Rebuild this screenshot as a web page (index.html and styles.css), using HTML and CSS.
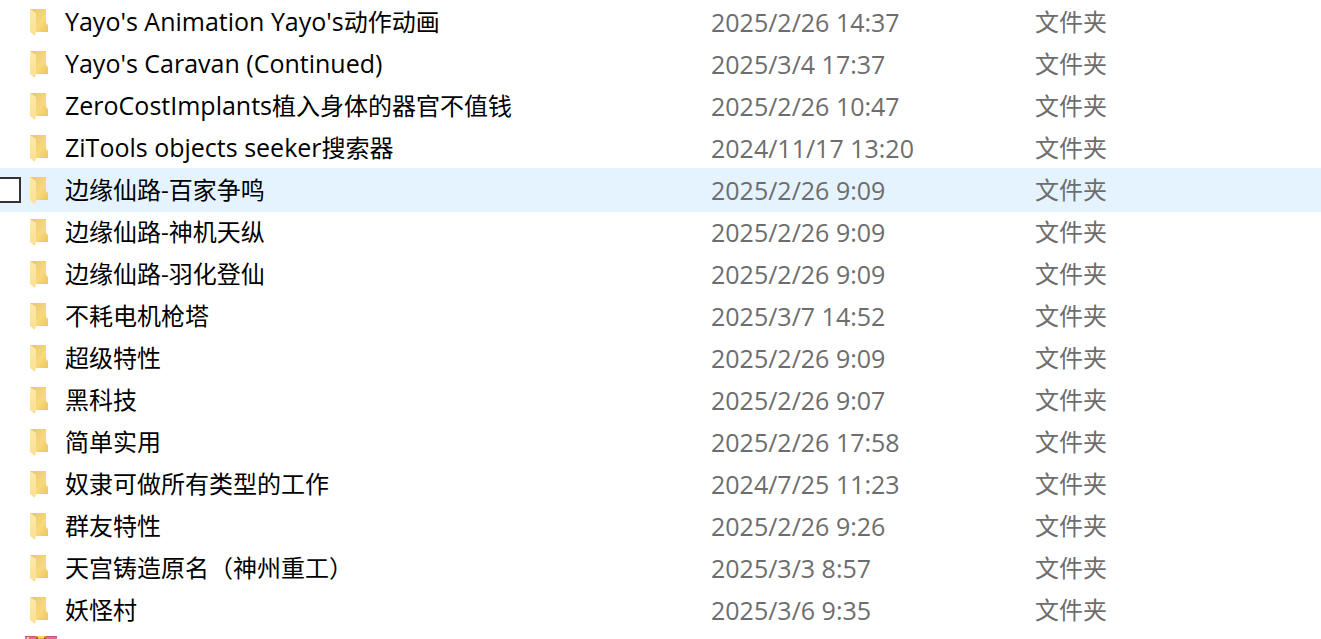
FILE: index.html
```
<!DOCTYPE html>
<html lang="zh-CN">
  <head>
    <meta charset="UTF-8" />
    <meta name="viewport" content="width=device-width, initial-scale=1.0" />
    <title>文件夹</title>
    <link rel="stylesheet" href="styles.css" />
  </head>
  <body>
    <svg class="sprite" aria-hidden="true">
      <defs>
        <linearGradient id="back" x1="0" y1="0" x2="1" y2="1">
          <stop offset="0" stop-color="#e6c673" />
          <stop offset="0.6" stop-color="#f8d97c" />
          <stop offset="1" stop-color="#ebc660" />
        </linearGradient>
        <linearGradient id="flap" x1="0" y1="0" x2="0" y2="1">
          <stop offset="0" stop-color="#ffe9ab" />
          <stop offset="1" stop-color="#fbdf92" />
        </linearGradient>
      </defs>
      <symbol id="folder" viewBox="0 0 19 27">
        <path d="M0 0H16V14L18 16V23H5L0 21Z" fill="url(#back)" />
        <path d="M0 0L6 4V23L5 27L0 23Z" fill="url(#flap)" />
      </symbol>
    </svg>
    <main>
      <table class="files">
        <colgroup>
          <col class="col-check" />
          <col class="col-icon" />
          <col class="col-name" />
          <col class="col-date" />
          <col class="col-type" />
        </colgroup>
        <tbody>
          <tr>
            <td></td>
            <td><svg class="folder"><use href="#folder" /></svg></td>
            <td class="name"><span class="latin">Yayo's Animation Yayo's</span>动作动画</td>
            <td class="date">2025/2/26 14:37</td>
            <td>文件夹</td>
          </tr>
          <tr>
            <td></td>
            <td><svg class="folder"><use href="#folder" /></svg></td>
            <td class="name"><span class="latin">Yayo's Caravan (Continued)</span></td>
            <td class="date">2025/3/4 17:37</td>
            <td>文件夹</td>
          </tr>
          <tr>
            <td></td>
            <td><svg class="folder"><use href="#folder" /></svg></td>
            <td class="name"><span class="latin">ZeroCostImplants</span>植入身体的器官不值钱</td>
            <td class="date">2025/2/26 10:47</td>
            <td>文件夹</td>
          </tr>
          <tr>
            <td></td>
            <td><svg class="folder"><use href="#folder" /></svg></td>
            <td class="name"><span class="latin">ZiTools objects seeker</span>搜索器</td>
            <td class="date">2024/11/17 13:20</td>
            <td>文件夹</td>
          </tr>
          <tr class="active">
            <td><input class="check" type="checkbox" aria-labelledby="active-name" /></td>
            <td><svg class="folder"><use href="#folder" /></svg></td>
            <td class="name" id="active-name">边缘仙路-百家争鸣</td>
            <td class="date">2025/2/26 9:09</td>
            <td>文件夹</td>
          </tr>
          <tr>
            <td></td>
            <td><svg class="folder"><use href="#folder" /></svg></td>
            <td class="name">边缘仙路-神机天纵</td>
            <td class="date">2025/2/26 9:09</td>
            <td>文件夹</td>
          </tr>
          <tr>
            <td></td>
            <td><svg class="folder"><use href="#folder" /></svg></td>
            <td class="name">边缘仙路-羽化登仙</td>
            <td class="date">2025/2/26 9:09</td>
            <td>文件夹</td>
          </tr>
          <tr>
            <td></td>
            <td><svg class="folder"><use href="#folder" /></svg></td>
            <td class="name">不耗电机枪塔</td>
            <td class="date">2025/3/7 14:52</td>
            <td>文件夹</td>
          </tr>
          <tr>
            <td></td>
            <td><svg class="folder"><use href="#folder" /></svg></td>
            <td class="name">超级特性</td>
            <td class="date">2025/2/26 9:09</td>
            <td>文件夹</td>
          </tr>
          <tr>
            <td></td>
            <td><svg class="folder"><use href="#folder" /></svg></td>
            <td class="name">黑科技</td>
            <td class="date">2025/2/26 9:07</td>
            <td>文件夹</td>
          </tr>
          <tr>
            <td></td>
            <td><svg class="folder"><use href="#folder" /></svg></td>
            <td class="name">简单实用</td>
            <td class="date">2025/2/26 17:58</td>
            <td>文件夹</td>
          </tr>
          <tr>
            <td></td>
            <td><svg class="folder"><use href="#folder" /></svg></td>
            <td class="name">奴隶可做所有类型的工作</td>
            <td class="date">2024/7/25 11:23</td>
            <td>文件夹</td>
          </tr>
          <tr>
            <td></td>
            <td><svg class="folder"><use href="#folder" /></svg></td>
            <td class="name">群友特性</td>
            <td class="date">2025/2/26 9:26</td>
            <td>文件夹</td>
          </tr>
          <tr>
            <td></td>
            <td><svg class="folder"><use href="#folder" /></svg></td>
            <td class="name">天宫铸造原名（神州重工）</td>
            <td class="date">2025/3/3 8:57</td>
            <td>文件夹</td>
          </tr>
          <tr>
            <td></td>
            <td><svg class="folder"><use href="#folder" /></svg></td>
            <td class="name">妖怪村</td>
            <td class="date">2025/3/6 9:35</td>
            <td>文件夹</td>
          </tr>
        </tbody>
      </table>
      <!-- archive icon of the next row, cut by the window edge -->
      <svg class="archive" viewBox="0 0 32 32" aria-hidden="true">
        <rect width="32" height="10" fill="#e0689a" />
        <rect width="32" height="1" fill="#c9527f" />
        <rect y="10" width="32" height="11" fill="#5a8fd8" />
        <rect y="21" width="32" height="11" fill="#5fb56a" />
        <rect x="11" width="10" height="32" fill="#e0a92e" />
        <path d="M2 1H4V3H2ZM13 0H19V2H13Z" fill="#f7dc62" />
        <path d="M11 1H13V3H11ZM19 1H21V3H19Z" fill="#a8701c" />
      </svg>
    </main>
  </body>
</html>
```
FILE: styles.css
```
:root {
  --text-color: #000000;
  --muted-color: #6d6d6d;
  --active-color: #e5f3ff;
}

*,
*::before,
*::after {
  box-sizing: border-box;
}

body {
  margin: 0;
  height: 100vh;
  overflow: hidden;
  background-color: #ffffff;
  color: var(--muted-color);
  font-family: "Open Sans", "Noto Sans CJK SC", sans-serif;
  font-size: 24px;
}

main {
  padding-top: 1px;
}

.sprite {
  position: absolute;
  width: 0;
  height: 0;
}

.files {
  width: 100%;
  table-layout: fixed;
  border-collapse: collapse;
}

.files tr {
  height: 42px;
}

.files td {
  padding: 0;
  line-height: 42px;
  white-space: nowrap;
}

.col-check {
  width: 30px;
}

.col-icon {
  width: 35px;
}

.col-name {
  width: 646px;
}

.col-date {
  width: 324px;
}

.files .name {
  color: var(--text-color);
}

.files .date,
.latin {
  font-size: 25px;
}

.latin {
  line-height: 1;
}

.files .active {
  background-color: var(--active-color);
  box-shadow: 0 0 0 1px var(--active-color);
}

.folder {
  display: block;
  width: 19px;
  height: 27px;
  margin-top: 1px;
}

.check {
  appearance: none;
  display: block;
  width: 26px;
  height: 26px;
  margin: 0 0 0 -5px;
  border: 2px solid #333333;
  background-color: #ffffff;
}

.archive {
  display: block;
  width: 32px;
  height: 32px;
  margin: 5px 0 0 25px;
}
```
